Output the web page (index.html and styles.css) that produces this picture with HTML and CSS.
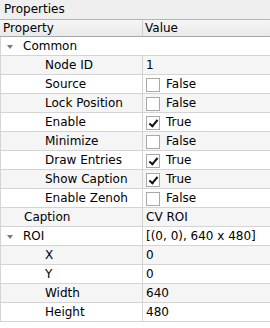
FILE: index.html
```html
<!DOCTYPE html>
<html>
<head>
<meta charset="utf-8">
<link rel="stylesheet" href="styles.css">
</head>
<body>
<div class="panel">
  <div class="title">Properties</div>
  <div class="header">
    <div class="hcell name">Property</div>
    <div class="hcell">Value</div>
  </div>
  <div class="table">
    <div class="row group"><div class="cell name lvl0"><span class="arrow"></span>Common</div><div class="cell value"></div></div>
    <div class="row alt"><div class="cell name lvl1">Node ID</div><div class="cell value">1</div></div>
    <div class="row"><div class="cell name lvl1">Source</div><div class="cell value"><span class="box"></span>False</div></div>
    <div class="row alt"><div class="cell name lvl1">Lock Position</div><div class="cell value"><span class="box"></span>False</div></div>
    <div class="row"><div class="cell name lvl1">Enable</div><div class="cell value"><span class="box checked"></span>True</div></div>
    <div class="row alt"><div class="cell name lvl1">Minimize</div><div class="cell value"><span class="box"></span>False</div></div>
    <div class="row"><div class="cell name lvl1">Draw Entries</div><div class="cell value"><span class="box checked"></span>True</div></div>
    <div class="row alt"><div class="cell name lvl1">Show Caption</div><div class="cell value"><span class="box checked"></span>True</div></div>
    <div class="row"><div class="cell name lvl1">Enable Zenoh</div><div class="cell value"><span class="box"></span>False</div></div>
    <div class="row alt"><div class="cell name lvl0b">Caption</div><div class="cell value">CV ROI</div></div>
    <div class="row"><div class="cell name lvl0"><span class="arrow"></span>ROI</div><div class="cell value">[(0, 0), 640 x 480]</div></div>
    <div class="row alt"><div class="cell name lvl1">X</div><div class="cell value">0</div></div>
    <div class="row"><div class="cell name lvl1">Y</div><div class="cell value">0</div></div>
    <div class="row alt"><div class="cell name lvl1">Width</div><div class="cell value">640</div></div>
    <div class="row"><div class="cell name lvl1">Height</div><div class="cell value">480</div></div>
  </div>
</div>
</body>
</html>
```
FILE: styles.css
```css
html, body {
  margin: 0;
  padding: 0;
  background: #ffffff;
}
body {
  font-family: "DejaVu Sans", sans-serif;
  font-size: 12px;
  color: #000;
  width: 270px;
  height: 328px;
  overflow: hidden;
}
.title {
  height: 19px;
  line-height: 19px;
  padding-left: 4px;
  background: #efefef;
  border-bottom: 1px solid #b4b4b4;
}
.header {
  display: grid;
  grid-template-columns: 143px 1fr;
  height: 16px;
  background: linear-gradient(#f6f6f6, #e9e9e9);
  border-bottom: 1px solid #a8a8a8;
}
.hcell {
  line-height: 16px;
  padding-left: 3px;
}
.hcell.name {
  border-right: 1px solid #cfcfcf;
  padding-left: 3px;
}
.header .hcell + .hcell {
  padding-left: 2px;
}
.table {
  border-left: 1px solid #d4d4d4;
}
.row {
  display: grid;
  grid-template-columns: 142px 1fr;
  height: 18px;
  border-bottom: 1px solid #d4d4d4;
  background: #ffffff;
}
.row.alt {
  background: #f5f5f5;
}
.cell {
  display: flex;
  align-items: center;
  line-height: 18px;
  white-space: nowrap;
}
.cell.name {
  border-right: 1px solid #d4d4d4;
}
.row.group .cell.name {
  border-right: none;
}
.lvl0 {
  padding-left: 6px;
}
.lvl0b {
  padding-left: 23px;
}
.lvl1 {
  padding-left: 44px;
}
.arrow {
  width: 0;
  height: 0;
  border-left: 3.5px solid transparent;
  border-right: 3.5px solid transparent;
  border-top: 4px solid #7a7a7a;
  margin-right: 10px;
  margin-top: 1px;
}
.value {
  padding-left: 3px;
}
.box {
  box-sizing: border-box;
  width: 14px;
  height: 14px;
  border: 1px solid #a9a9a9;
  background: #fff;
  margin-right: 6px;
  margin-top: 2px;
  position: relative;
}
.box.checked::after {
  content: "";
  position: absolute;
  left: 4px;
  top: 1px;
  width: 3px;
  height: 7px;
  border-right: 2px solid #111;
  border-bottom: 2px solid #111;
  transform: rotate(40deg);
}
```
